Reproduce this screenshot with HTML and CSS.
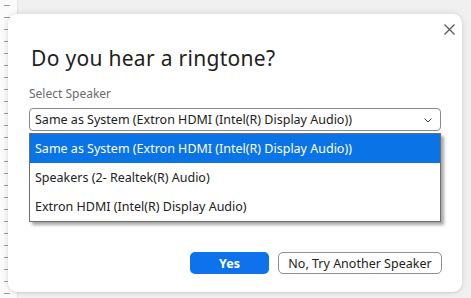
FILE: index.html
```html
<!DOCTYPE html>
<html>
<head>
<meta charset="utf-8">
<link rel="stylesheet" href="styles.css">
</head>
<body>
<div class="page">
  <div class="ruler"></div>
  <div class="workspace"></div>
</div>
<div class="dialog">
  <button class="close" aria-label="Close">
    <svg width="11" height="11" viewBox="0 0 11 11"><path d="M0.5 0.5 L10.5 10.5 M10.5 0.5 L0.5 10.5" stroke="#555" stroke-width="1.2" fill="none"/></svg>
  </button>
  <h1 class="title">Do you hear a ringtone?</h1>
  <div class="label">Select Speaker</div>
  <div class="select">
    <span class="select-text">Same as System (Extron HDMI (Intel(R) Display Audio))</span>
    <svg class="chev" width="8" height="5" viewBox="0 0 8 5"><path d="M0.5 0.5 L4 4 L7.5 0.5" stroke="#444" stroke-width="1" fill="none"/></svg>
  </div>
  <ul class="list">
    <li class="item selected">Same as System (Extron HDMI (Intel(R) Display Audio))</li>
    <li class="item">Speakers (2- Realtek(R) Audio)</li>
    <li class="item">Extron HDMI (Intel(R) Display Audio)</li>
  </ul>
  <div class="actions">
    <button class="btn primary">Yes</button>
    <button class="btn secondary">No, Try Another Speaker</button>
  </div>
</div>
</body>
</html>
```
FILE: styles.css
```css
html, body {
  margin: 0;
  padding: 0;
  width: 471px;
  height: 298px;
  overflow: hidden;
}
body {
  font-family: "Noto Sans", "Open Sans", sans-serif;
  background: #f0f0f0;
  position: relative;
}
.page {
  display: flex;
  height: 298px;
}
.ruler {
  width: 17px;
  border-right: 1px solid #e2e2e2;
  background-color: #fbfbfb;
  background-image: repeating-linear-gradient(to bottom, transparent 0, transparent 5px, #9a9a9a 5px, #9a9a9a 6px, transparent 6px, transparent 12px);
  background-size: 6px 298px;
  background-position: 4px 0;
  background-repeat: no-repeat;
}
.workspace {
  flex: 1;
  background: #f0f0f0;
}
.dialog {
  position: absolute;
  left: 8px;
  top: 14px;
  width: 454px;
  height: 278px;
  background: #fff;
  border-radius: 9px;
  box-shadow: 0 0 6px rgba(0,0,0,0.12), 0 1px 2px rgba(0,0,0,0.08);
  box-sizing: border-box;
  padding: 29px 21px 0 21px;
}
.close {
  position: absolute;
  right: 7px;
  top: 10px;
  width: 11px;
  height: 11px;
  padding: 0;
  border: 0;
  background: none;
  display: block;
}
.close svg { display: block; }
.title {
  margin: 0 0 0 2px;
  font-weight: 400;
  font-size: 21px;
  line-height: 30px;
  color: #1e1e1e;
  letter-spacing: 0.3px;
}
.label {
  margin-top: 13px;
  font-size: 12px;
  line-height: 16px;
  color: #6b6b6b;
}
.select {
  margin-top: 6px;
  height: 23px;
  box-sizing: border-box;
  border: 1px solid #8a8a8a;
  border-radius: 4px;
  display: flex;
  align-items: center;
  justify-content: space-between;
  padding: 0 8px 0 5px;
}
.select-text {
  font-size: 12.5px;
  color: #222;
  white-space: nowrap;
}
.chev { display: block; margin-top: 1px; }
.list {
  list-style: none;
  margin: 2px 0 0 0;
  padding: 0;
  width: 412px;
  box-sizing: border-box;
  border: 1px solid #6e6e6e;
  background: #fff;
  box-shadow: 3px 3px 3px rgba(0,0,0,0.35);
}
.item {
  height: 29px;
  line-height: 29px;
  padding-left: 5px;
  font-size: 12.5px;
  color: #222;
  white-space: nowrap;
}
.item.selected {
  background: #0a74e6;
  color: #fff;
}
.actions {
  display: flex;
  justify-content: flex-end;
  gap: 9px;
  margin-top: 30px;
  margin-right: -1px;
}
.btn {
  height: 22px;
  font-family: "Noto Sans", "Open Sans", sans-serif;
  font-size: 12.5px;
  border-radius: 5px;
  padding: 0;
  box-sizing: border-box;
}
.primary {
  width: 79px;
  background: #0e72ed;
  border: 0;
  color: #fff;
  font-weight: 700;
}
.secondary {
  width: 164px;
  background: #fff;
  border: 1px solid #8f8f8f;
  color: #232323;
}
```
